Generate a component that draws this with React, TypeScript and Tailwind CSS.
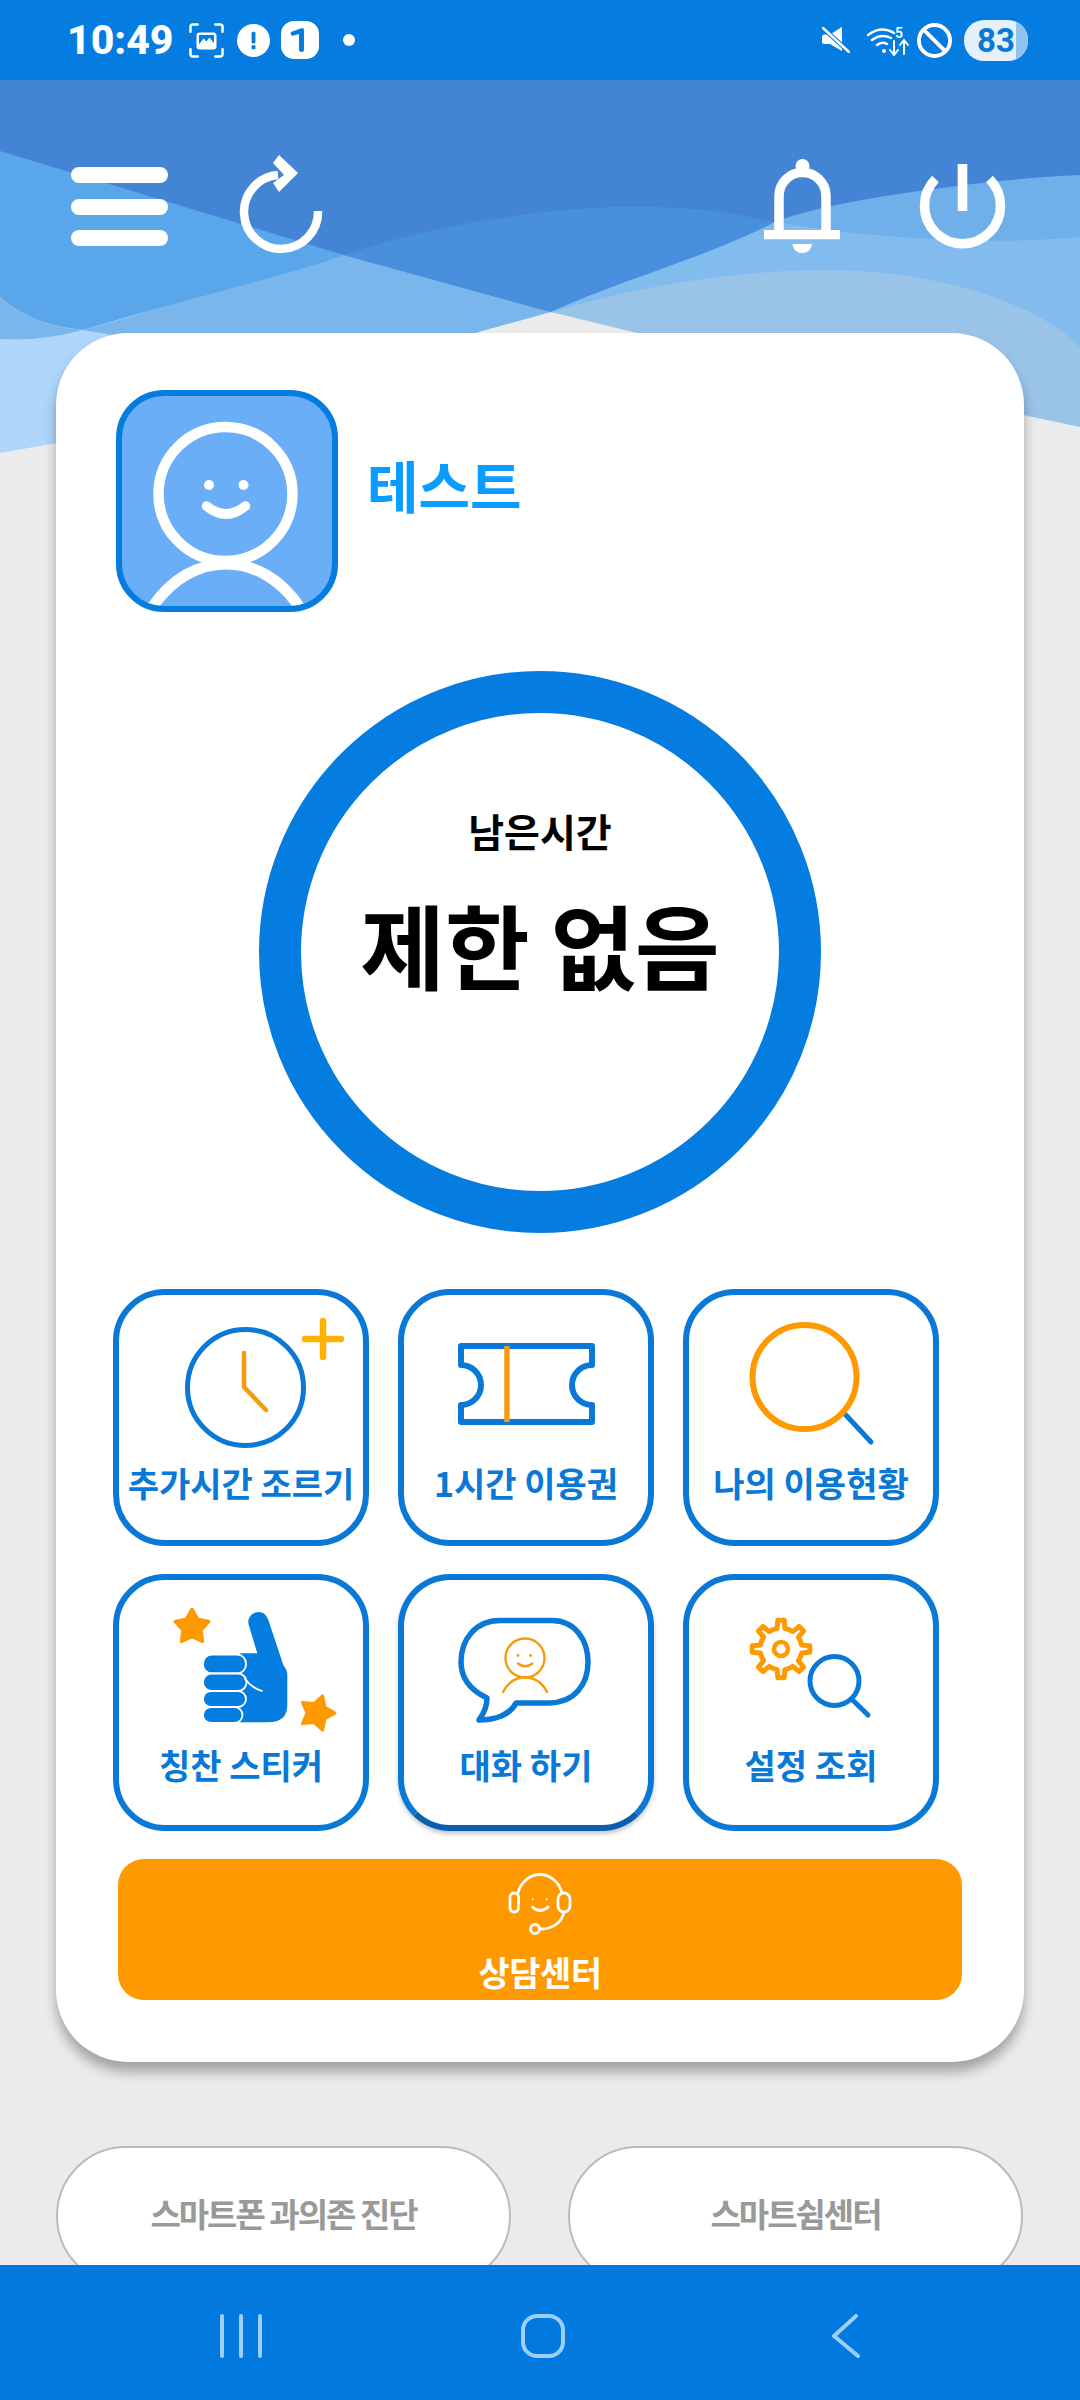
const gearPath = (cx: number, cy: number, ro: number, ri: number, teeth: number) => {
  const pts: string[] = [];
  const step = (Math.PI * 2) / teeth;
  for (let i = 0; i < teeth; i++) {
    const a = i * step - Math.PI / 2;
    const offs: [number, number][] = [
      [-0.5, ri],
      [-0.24, ri],
      [-0.14, ro],
      [0.14, ro],
      [0.24, ri],
    ];
    offs.forEach(([o, r]) => {
      const t = a + o * step;
      pts.push(`${(cx + r * Math.cos(t)).toFixed(1)} ${(cy + r * Math.sin(t)).toFixed(1)}`);
    });
  }
  return `M${pts.join("L")}Z`;
};

const BLUE = "#0A78D6";
const ORANGE = "#F59B0C";

const Star = ({ cx, cy, r, rot }: { cx: number; cy: number; r: number; rot: number }) => {
  const pts: string[] = [];
  for (let i = 0; i < 10; i++) {
    const rad = i % 2 === 0 ? r : r * 0.55;
    const t = ((rot + i * 36 - 90) * Math.PI) / 180;
    pts.push(`${(cx + rad * Math.cos(t)).toFixed(1)},${(cy + rad * Math.sin(t)).toFixed(1)}`);
  }
  return <polygon points={pts.join(" ")} fill="#FF9900" stroke="#FF9900" strokeWidth="3" strokeLinejoin="round" />;
};

const Tile = ({
  label,
  box,
  extra,
  labelClass,
  children,
}: {
  label: string;
  box: string;
  extra?: string;
  labelClass?: string;
  children: React.ReactNode;
}) => (
  <div className={`flex h-[257px] flex-col items-center rounded-[52px] border-[6px] border-[#0A78D6] bg-white ${extra ?? ""}`}>
    <svg viewBox={box} className="h-[165px] w-[244px] shrink-0" fill="none">
      {children}
    </svg>
    <div className={`h-[46px] text-center text-[34px] leading-[46px] font-semibold whitespace-nowrap text-[#0A78D6] ${labelClass ?? ""}`}>
      {label}
    </div>
  </div>
);

const Waves = () => (
  <svg viewBox="0 80 1080 400" className="absolute top-0 left-0 h-[400px] w-[1080px]">
    <path d="M0 339Q40 342 83 330L344 230L551 290L475 333L300 400L0 453Z" fill="#AED5FA" />
    <path d="M83 330C135 316 190 300 240 275C275 262 310 262 344 255L344 230L551 290L551 312L475 333L120 336Z" fill="#7AB6EC" />
    <path d="M0 130L344 230V255C290 275 200 295 83 330Q30 325 0 297Z" fill="#59A7EA" />
    <path d="M0 297Q30 325 83 330Q40 342 0 339Z" fill="#7AB6EC" />
    <path d="M0 80H1080V240L800 240L551 312L344 255L0 151Z" fill="#4484D4" />
    <path d="M344 255C440 222 560 205 654 207C700 208 740 214 775 222L800 240L600 320L551 312Z" fill="#4890DE" />
    <path d="M551 312C620 280 700 260 775 222L1080 225V347L700 310Z" fill="#82BBEE" />
    <path d="M775 222C810 208 880 196 927 190C970 184 1030 177 1080 175V237C1000 245 880 240 775 222Z" fill="#6FB0EA" />
    <path d="M551 312C640 285 740 270 826 270C940 270 1040 305 1080 347V427L637 333Z" fill="#9AC3E8" />
  </svg>
);

const StatusBar = () => (
  <div className="relative flex h-[80px] shrink-0 items-center bg-[#047CE0] pr-[52px] pl-[67px] text-white">
    <span className="w-[104px] font-['Roboto',sans-serif] text-[41px] leading-none font-extrabold">10:49</span>
    <svg viewBox="0 0 36 36" className="ml-[18px] h-[35px] w-[35px]" fill="none" stroke="white" strokeWidth="2.6" strokeLinecap="round">
      <path d="M1.5 9V4Q1.5 1.5 4 1.5H9M27 1.5H32Q34.5 1.5 34.5 4V9M34.5 27V32Q34.5 34.5 32 34.5H27M9 34.5H4Q1.5 34.5 1.5 32V27" />
      <rect x="9" y="11" width="18" height="15" rx="2" />
      <path d="M10 22L15 16L18 19L21 15L26 21V25H10Z" fill="white" stroke="none" />
    </svg>
    <svg viewBox="0 0 34 34" className="ml-[13px] h-[33px] w-[33px]">
      <circle cx="17" cy="17" r="17" fill="white" />
      <rect x="15" y="8" width="4" height="12" rx="1.5" fill="#047CE0" />
      <rect x="15" y="22" width="4" height="4" rx="1" fill="#047CE0" />
    </svg>
    <svg viewBox="0 0 38 38" className="ml-[11px] h-[38px] w-[38px]">
      <rect x="0" y="0" width="38" height="38" rx="13" fill="white" />
      <path d="M10 11L21 7Q23 7 23 9V29Q23 31 20.5 31Q18 31 18 29V13L11 15Q9 13 10 11Z" fill="#047CE0" />
    </svg>
    <span className="ml-[24px] h-[12px] w-[12px] rounded-full bg-white" />
    <div className="ml-auto flex items-center">
      <svg viewBox="0 0 28 26" className="h-[26px] w-[28px]" fill="white">
        <path d="M0 10Q0 7.5 2 7.5H8L20 0V24L8 17H2Q0 17 0 15Z" />
        <path d="M1 1L27 25" stroke="#047CE0" strokeWidth="4.5" />
        <path d="M1 1L27 25" stroke="white" strokeWidth="2.4" strokeLinecap="round" />
      </svg>
      <svg viewBox="0 0 42 31" className="ml-[17px] h-[31px] w-[42px]" fill="none" stroke="white" strokeWidth="2.4" strokeLinecap="round">
        <path d="M1 10Q14 0 27 8M5 15Q14 8 24 13M10 20Q15 16 20 19" />
        <circle cx="17" cy="26" r="2" fill="white" stroke="none" />
        <path d="M27 16V29M23 25L27 30L31 25M37 29V16M33 20L37 15L41 20" strokeWidth="2" />
        <text x="28" y="13" fontSize="14" fontWeight="600" fill="white" stroke="none" fontFamily="Roboto, sans-serif">5</text>
      </svg>
      <svg viewBox="0 0 36 36" className="ml-[8px] h-[35px] w-[35px]" fill="none" stroke="white" strokeWidth="4">
        <circle cx="18" cy="18" r="16" />
        <path d="M7 7L29 29" />
      </svg>
      <div className="relative ml-[12px] flex h-[41px] w-[64px] items-center overflow-hidden rounded-[20px] bg-[#E4F1FC] pl-[13px]">
        <span className="absolute top-0 right-0 bottom-0 w-[12px] bg-[#8FC3F2]" />
        <span className="relative font-['Roboto',sans-serif] text-[33px] leading-none font-bold text-[#0A78D6]">83</span>
      </div>
    </div>
  </div>
);

const Header = () => (
  <div className="relative mt-[70px] mb-[75px] flex h-[108px] items-start pr-[71px] pl-[71px]">
    <div className="mt-[17px] flex flex-col gap-[15.5px]">
      <span className="h-[16px] w-[97px] rounded-[8px] bg-white" />
      <span className="h-[16px] w-[97px] rounded-[8px] bg-white" />
      <span className="h-[16px] w-[97px] rounded-[8px] bg-white" />
    </div>
    <svg viewBox="235 150 92 108" className="ml-[67px] h-[108px] w-[92px]" fill="none">
      <path d="M318 211A37 37 0 1 1 278 175" stroke="white" strokeWidth="8.5" />
      <polygon points="279,155 298,173 279,192 273,183 284,175 273,163" fill="white" />
    </svg>
    <svg viewBox="760 155 84 102" className="mt-[5px] ml-auto h-[102px] w-[84px]" fill="none">
      <circle cx="802.5" cy="166" r="7" fill="white" />
      <path d="M779 232V196A23.5 23.5 0 0 1 826 196V232" stroke="white" strokeWidth="9.5" />
      <rect x="764" y="230" width="76" height="9.3" fill="white" />
      <path d="M792.5 244H812A9.7 9 0 0 1 792.5 244Z" fill="white" />
    </svg>
    <svg viewBox="917 160 92 92" className="mt-[10px] ml-[73px] h-[92px] w-[92px]" fill="none">
      <path d="M935.5 179A38 38 0 1 0 989.5 179" stroke="white" strokeWidth="9.5" />
      <rect x="957.7" y="164" width="9.6" height="47" fill="white" />
    </svg>
  </div>
);

const Profile = () => (
  <div className="flex items-center gap-[29px] pl-[60px]">
    <div className="h-[222px] w-[222px] shrink-0 overflow-hidden rounded-[48px] border-[6px] border-[#047CE0] bg-[#6AAEF7]">
      <svg viewBox="122 396 210 210" className="h-[210px] w-[210px]" fill="none" stroke="white" strokeLinecap="round">
        <circle cx="225.5" cy="494" r="67" strokeWidth="10.5" />
        <circle cx="209" cy="485" r="5" fill="white" stroke="none" />
        <circle cx="243.5" cy="485" r="5" fill="white" stroke="none" />
        <path d="M206.5 506Q226 522 245.5 506" strokeWidth="9.5" />
        <path d="M148 614C170 577 200 564 226 564C252 564 282 577 304 614" strokeWidth="11" strokeLinecap="butt" />
      </svg>
    </div>
    <div className="pb-[34px] text-[56px] leading-[60px] font-bold text-[#0A9CFF]">테스트</div>
  </div>
);

const Ring = () => (
  <div className="mx-auto mt-[59px] flex h-[562px] w-[562px] flex-col items-center rounded-full border-[42px] border-[#047CE0] pt-[95px]">
    <div className="text-[39px] leading-[44px] font-semibold text-black">남은시간</div>
    <div className="mt-[41px] text-[92px] leading-[100px] font-bold text-black">제한 없음</div>
  </div>
);

const Tiles = () => (
  <div className="mt-[56px] ml-[57px] grid w-[826px] grid-cols-3 gap-x-[29px] gap-y-[28px]">
    <Tile label="추가시간 조르기" box="119 1295 244 165">
      <circle cx="245.5" cy="1387.5" r="58" stroke={BLUE} strokeWidth="5" />
      <path d="M244 1353V1387L266 1410" stroke={ORANGE} strokeWidth="4.5" strokeLinecap="round" strokeLinejoin="round" />
      <path d="M323 1321V1357M305 1339H341" stroke="#FFB300" strokeWidth="6.5" strokeLinecap="round" />
    </Tile>
    <Tile label="1시간 이용권" box="404 1295 244 165">
      <path d="M461 1346H592V1365A20 20 0 0 0 592 1405V1422H461V1405A20 20 0 0 0 461 1365Z" stroke={BLUE} strokeWidth="6" strokeLinejoin="round" />
      <path d="M507 1346V1422" stroke={ORANGE} strokeWidth="5.5" />
    </Tile>
    <Tile label="나의 이용현황" box="689 1295 244 165">
      <path d="M843 1412L871 1442" stroke={BLUE} strokeWidth="5" strokeLinecap="round" />
      <circle cx="804.5" cy="1377" r="52" stroke="#FF9900" strokeWidth="6" />
    </Tile>
    <Tile label="칭찬 스티커" box="119 1580 244 165" labelClass="-mt-[3px]">
      <Star cx={192} cy={1627} r={18} rot={0} />
      <Star cx={317} cy={1713} r={18} rot={18} />
      <path d="M240 1653.3H257.3L248.8 1625A10 10 0 0 1 268 1619L283.3 1665Q287.3 1670 287.3 1675V1705Q287.3 1722.3 268 1722.3H236.7Z" fill="#047CE0" />
      <g fill="#047CE0" stroke="white" strokeWidth="1.8">
        <rect x="203" y="1654.5" width="43" height="19" rx="9" />
        <rect x="203" y="1673.5" width="43.5" height="17.5" rx="8.5" />
        <rect x="203" y="1691" width="43" height="16" rx="8" />
        <rect x="203" y="1707" width="39.5" height="16" rx="8" />
      </g>
      <path d="M245 1679Q252 1688 262 1691" stroke="white" strokeWidth="1.8" strokeLinecap="round" />
    </Tile>
    <Tile label="대화 하기" box="404 1580 244 165" labelClass="-mt-[3px]" extra="border-b-[#0A5FB0] shadow-[0_3px_4px_rgba(0,0,0,0.22)]">
      <path d="M500 1620.5H552C575 1620.5 588 1640 588 1662C588 1684 575 1703 548 1703H516C510 1715 495 1720 479 1720C482 1716 487 1708 487 1698C470 1690 461 1678 461 1662C461 1640 475 1620.5 500 1620.5Z" stroke={BLUE} strokeWidth="5.5" strokeLinejoin="round" />
      <g stroke={ORANGE} strokeWidth="2.4" strokeLinecap="round">
        <circle cx="525" cy="1658" r="19.5" />
        <path d="M518 1663.5Q525 1669 532.5 1663.5" />
        <path d="M503 1692Q510 1678 525 1677Q540 1678 547 1692" />
      </g>
      <circle cx="518" cy="1655.5" r="1.4" fill={ORANGE} />
      <circle cx="530.5" cy="1655.5" r="1.4" fill={ORANGE} />
    </Tile>
    <Tile label="설정 조회" box="689 1580 244 165" labelClass="-mt-[3px]">
      <path d={gearPath(781, 1649, 29, 21, 8)} stroke="#FF9900" strokeWidth="5" strokeLinejoin="round" />
      <circle cx="781" cy="1649" r="7" stroke="#FF9900" strokeWidth="4.5" />
      <circle cx="834.5" cy="1681" r="24.5" stroke={BLUE} strokeWidth="5" />
      <path d="M852.6 1700L868 1715" stroke={BLUE} strokeWidth="5" strokeLinecap="round" />
    </Tile>
  </div>
);

const Consult = () => (
  <div className="mt-[28px] ml-[62px] flex h-[141px] w-[844px] flex-col items-center rounded-[26px] bg-[#FF9900] pt-[11px]">
    <svg viewBox="505 1870 70 65" className="h-[65px] w-[70px] shrink-0" fill="none" stroke="white" strokeWidth="2.8" strokeLinecap="round">
      <rect x="510" y="1893" width="8.5" height="19" rx="4.2" />
      <rect x="558" y="1893" width="12" height="19" rx="6" />
      <path d="M518 1893C521 1881 531 1874.5 540 1874.5C549 1874.5 559 1881 562 1893" />
      <path d="M564 1912C562 1922 553 1929 541 1929" />
      <circle cx="535" cy="1929" r="4.5" />
      <path d="M532.5 1907Q540 1914 548 1907" />
      <circle cx="532.7" cy="1899.3" r="1.1" fill="white" stroke="none" />
      <circle cx="546.7" cy="1899.3" r="1.1" fill="white" stroke="none" />
    </svg>
    <div className="mt-[17px] text-[34px] leading-[40px] font-bold tracking-[-0.5px] text-white">상담센터</div>
  </div>
);

const Pill = ({ label }: { label: string }) => (
  <div className="flex h-[140px] w-[455px] items-center justify-center rounded-[70px] border-2 border-[#BBBBBB] bg-white pb-[5px] text-[33px] font-bold tracking-[-2px] text-[#999999]">
    {label}
  </div>
);

const NavBar = () => (
  <div className="relative z-10 flex h-[135px] shrink-0 items-center gap-[258px] bg-[#0279DE] pt-[7px] pl-[219px]">
    <svg viewBox="0 0 44 44" className="h-[44px] w-[44px]" fill="none" stroke="#9CD0FA" strokeWidth="4" strokeLinecap="round">
      <path d="M3 2V42M22 2V42M41 2V42" />
    </svg>
    <svg viewBox="0 0 44 44" className="h-[44px] w-[44px]" fill="none" stroke="#9CD0FA" strokeWidth="4">
      <rect x="2" y="2" width="40" height="40" rx="14" />
    </svg>
    <svg viewBox="0 0 44 44" className="h-[44px] w-[44px]" fill="none" stroke="#9CD0FA" strokeWidth="4" strokeLinecap="round" strokeLinejoin="round">
      <path d="M33 2L11 22L35 42" />
    </svg>
  </div>
);

export default function App() {
  return (
    <div className="flex h-[2400px] w-[1080px] flex-col overflow-hidden bg-[#EBEBEB] font-['Noto_Sans_CJK_KR',sans-serif]">
      <StatusBar />
      <main className="relative min-h-0 flex-1 overflow-hidden">
        <Waves />
        <Header />
        <section className="relative mx-[56px] h-[1729px] rounded-[72px] bg-white pt-[57px] shadow-[0_10px_12px_rgba(0,0,0,0.3)]">
          <Profile />
          <Ring />
          <Tiles />
          <Consult />
        </section>
        <div className="relative mt-[84px] flex gap-[57px] px-[56px]">
          <Pill label="스마트폰 과의존 진단" />
          <Pill label="스마트쉼센터" />
        </div>
      </main>
      <NavBar />
    </div>
  );
}
